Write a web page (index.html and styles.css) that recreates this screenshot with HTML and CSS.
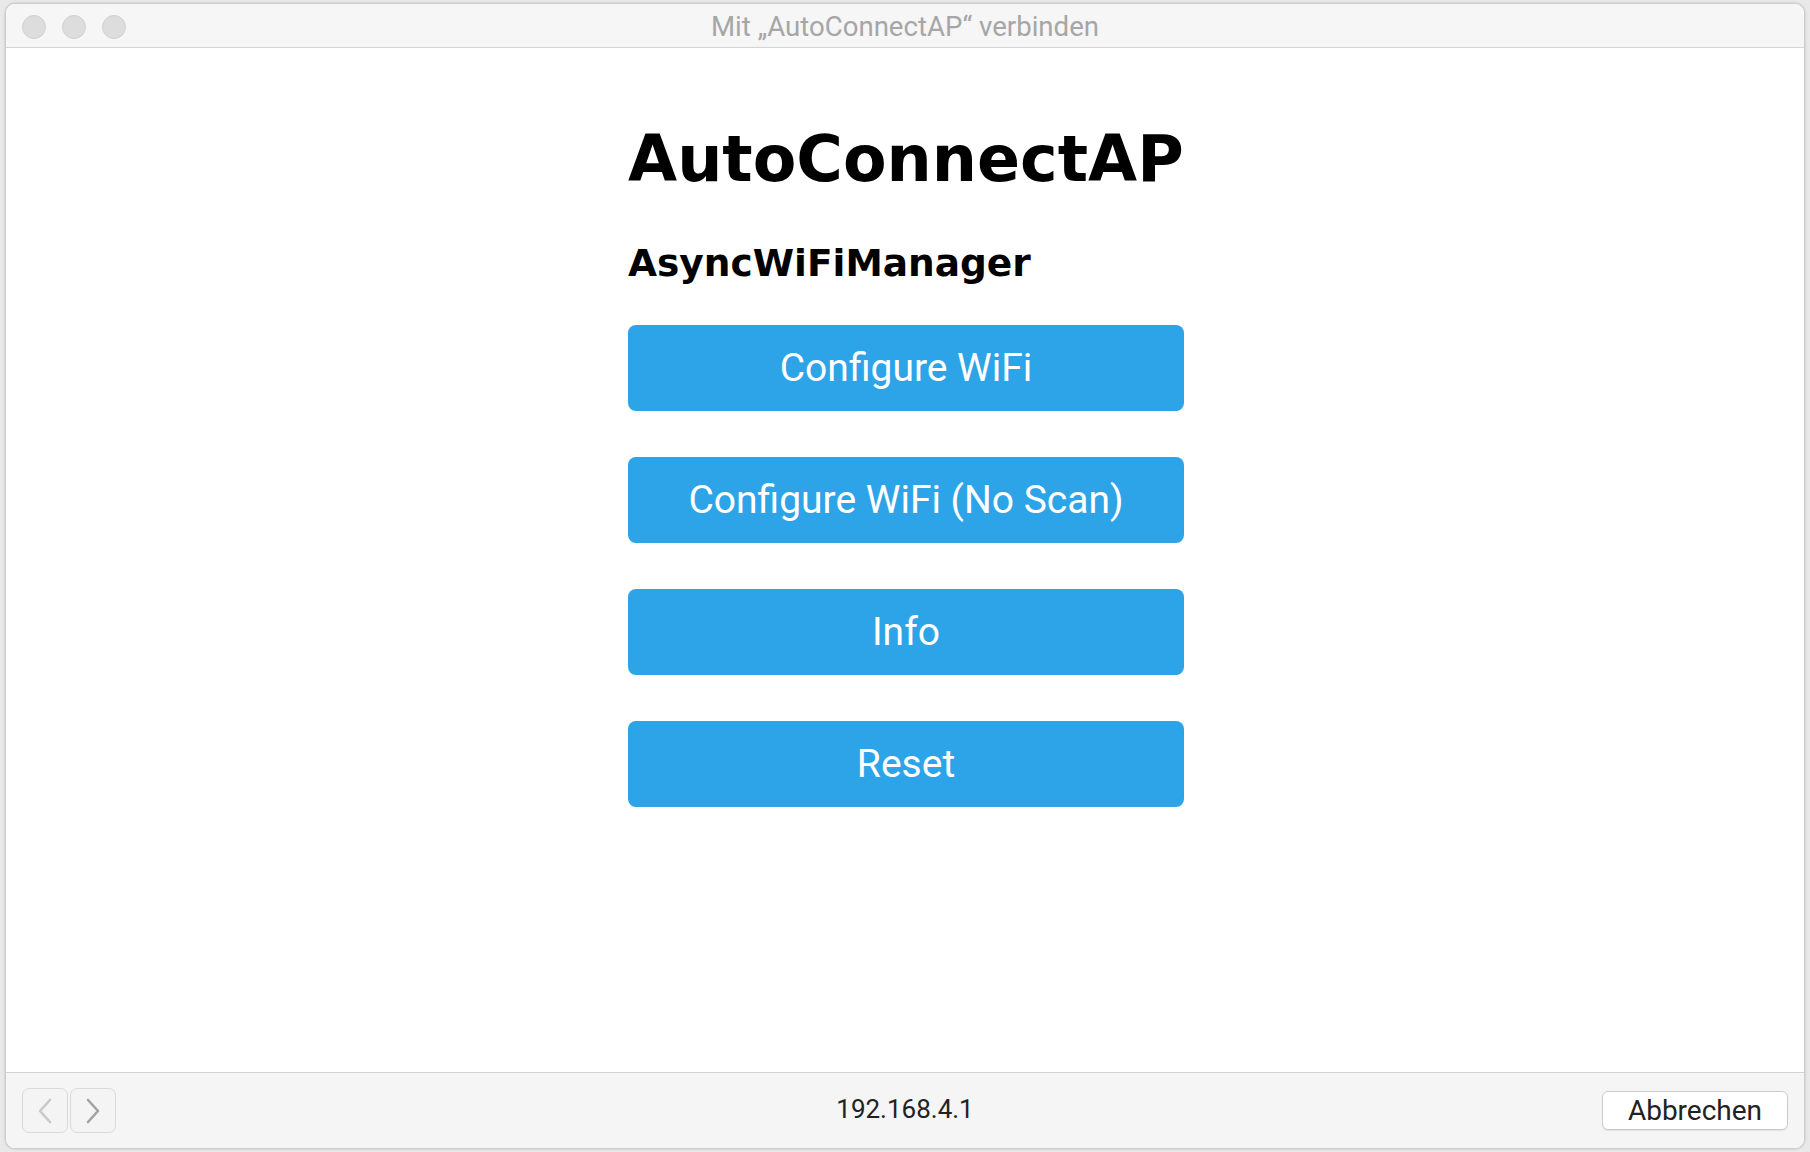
FILE: index.html
```html
<!DOCTYPE html>
<html lang="de">
<head>
<meta charset="utf-8">
<title>AutoConnectAP</title>
<link rel="stylesheet" href="styles.css">
</head>
<body>
<div class="window">
  <header class="titlebar">
    <div class="lights">
      <span class="light"></span>
      <span class="light"></span>
      <span class="light"></span>
    </div>
    <div class="title">Mit „AutoConnectAP“ verbinden</div>
    <div class="spacer"></div>
  </header>
  <main class="content">
    <div class="column">
      <h1 class="h1">AutoConnectAP</h1>
      <h3 class="h3">AsyncWiFiManager</h3>
      <div class="buttons">
        <button class="btn">Configure WiFi</button>
        <button class="btn">Configure WiFi (No Scan)</button>
        <button class="btn">Info</button>
        <button class="btn">Reset</button>
      </div>
    </div>
  </main>
  <footer class="footer">
    <div class="nav">
      <span class="navbtn">
        <svg class="chev back" width="16" height="26" viewBox="0 0 16 26"><polyline points="13,2 3,13 13,24" fill="none" stroke-width="2.6" stroke-linecap="round" stroke-linejoin="round"/></svg>
      </span>
      <span class="navbtn">
        <svg class="chev fwd" width="16" height="26" viewBox="0 0 16 26"><polyline points="3,2 13,13 3,24" fill="none" stroke-width="2.6" stroke-linecap="round" stroke-linejoin="round"/></svg>
      </span>
    </div>
    <div class="address">192.168.4.1</div>
    <div class="actions">
      <span class="cancel">Abbrechen</span>
    </div>
  </footer>
</div>
</body>
</html>
```
FILE: styles.css
```css
html, body {
  margin: 0;
  padding: 0;
}
body {
  background: #e9e9e9;
  padding: 3px 5px 0 5px;
  width: 1810px;
  height: 1152px;
  box-sizing: border-box;
  overflow: hidden;
}
.window {
  width: 1800px;
  height: 1146px;
  box-sizing: border-box;
  border: 1px solid #cdcdcd;
  border-radius: 10px;
  overflow: hidden;
  display: flex;
  flex-direction: column;
  background: #fff;
  box-shadow: 0 0 3px rgba(0,0,0,0.18);
}
.titlebar {
  height: 43px;
  flex: 0 0 43px;
  background: #f6f6f6;
  border-bottom: 1px solid #d4d4d4;
  display: grid;
  grid-template-columns: 1fr auto 1fr;
  align-items: center;
}
.lights {
  display: flex;
  gap: 16px;
  padding-left: 16px;
  padding-top: 1px;
}
.light {
  width: 22px;
  height: 22px;
  border-radius: 50%;
  background: #dddddd;
  border: 1px solid #d0d0d0;
}
.title {
  font-family: Roboto, "Liberation Sans", sans-serif;
  font-size: 27.6px;
  color: #a6a6a6;
  line-height: 43px;
  padding-top: 1px;
  white-space: nowrap;
}
.content {
  flex: 1 1 auto;
  display: flex;
  justify-content: center;
  padding-left: 2px;
  background: #fff;
}
.column {
  width: 556px;
  padding-top: 73px;
}
.h1 {
  margin: 0;
  font-family: "DejaVu Sans", Verdana, sans-serif;
  font-weight: bold;
  font-size: 63.5px;
  line-height: 76px;
  color: #000;
  white-space: nowrap;
}
.h3 {
  margin: 44px 0 0 0;
  font-family: "DejaVu Sans", Verdana, sans-serif;
  font-weight: bold;
  font-size: 37.5px;
  line-height: 44px;
  color: #000;
  white-space: nowrap;
}
.buttons {
  margin-top: 40px;
  display: flex;
  flex-direction: column;
  gap: 46px;
}
.btn {
  display: block;
  width: 100%;
  height: 86px;
  border: 0;
  border-radius: 8px;
  background: #2ea4e8;
  color: #fff;
  font-family: Roboto, "Liberation Sans", sans-serif;
  font-size: 39px;
  line-height: 86px;
  padding: 0;
  text-align: center;
}
.footer {
  flex: 0 0 75px;
  height: 75px;
  background: #f5f5f5;
  border-top: 1px solid #d2d2d2;
  display: grid;
  grid-template-columns: 1fr auto 1fr;
  align-items: center;
}
.nav {
  display: flex;
  gap: 2px;
  padding-left: 16px;
}
.navbtn {
  width: 44px;
  height: 43px;
  border: 1px solid #dadada;
  border-radius: 7px;
  background: #f4f4f4;
  display: flex;
  align-items: center;
  justify-content: center;
}
.chev.back polyline { stroke: #c9c9c9; }
.chev.fwd polyline { stroke: #a3a3a3; }
.address {
  font-family: Roboto, "Liberation Sans", sans-serif;
  font-size: 26px;
  color: #222;
  line-height: 30px;
  padding-bottom: 3px;
}
.actions {
  display: flex;
  justify-content: flex-end;
  padding-right: 16px;
}
.cancel {
  width: 184px;
  height: 37px;
  border: 1px solid #cbcbcb;
  border-radius: 6px;
  background: #fff;
  box-shadow: 0 1px 1px rgba(0,0,0,0.08);
  font-family: Roboto, "Liberation Sans", sans-serif;
  font-size: 28px;
  color: #222;
  line-height: 37px;
  text-align: center;
}
```
